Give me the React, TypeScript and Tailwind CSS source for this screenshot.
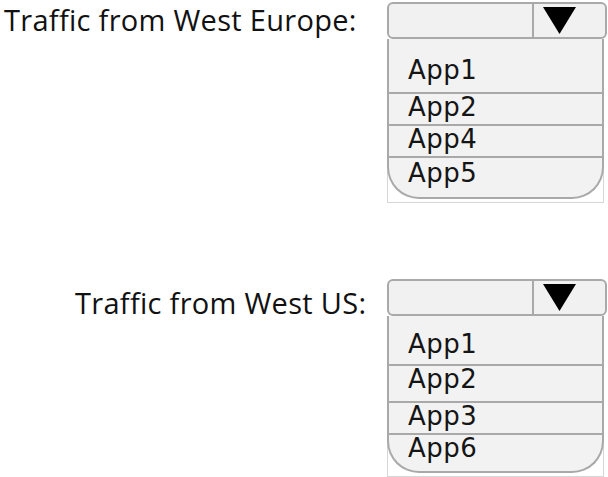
type Row = { label: string; h: number; pt: number; divider: boolean };

const europeRows: Row[] = [
  { label: "App1", h: 53, pt: 18, divider: false },
  { label: "App2", h: 32, pt: 0, divider: true },
  { label: "App4", h: 32, pt: 0, divider: true },
  { label: "App5", h: 41, pt: 2, divider: true },
];

const usRows: Row[] = [
  { label: "App1", h: 48, pt: 15, divider: false },
  { label: "App2", h: 37, pt: 0, divider: true },
  { label: "App3", h: 32, pt: 0, divider: true },
  { label: "App6", h: 38, pt: 0, divider: true },
];

function Dropdown({ rows }: { rows: Row[] }) {
  return (
    <div className="w-[220px] flex flex-col">
      <div className="h-[37px] flex rounded-[6px] border-2 border-[#a9a9a9] bg-[#f1f1f1]">
        <div className="flex-1" />
        <div className="w-[73px] border-l-2 border-[#a9a9a9] flex items-center pl-[9px]">
          <svg width="33" height="27" viewBox="0 0 33 27">
            <polygon points="0,0 33,0 16.5,27" fill="#000" />
          </svg>
        </div>
      </div>
      <div className="border border-[#d6d6d6] border-t-0 mr-[3px] pb-[3px]">
        <div className="border-2 border-t-0 border-[#a9a9a9] rounded-b-[32px] bg-[#f2f2f2] -mr-[1px] -ml-[1px] overflow-hidden">
          {rows.map((r) => (
            <div
              key={r.label}
              className={
                "pl-[19px] " + (r.divider ? "border-t-2 border-[#a9a9a9]" : "")
              }
              style={{ height: r.h, paddingTop: r.pt }}
            >
              <span className="block text-[26px] leading-none tracking-[0.5px] text-[#151515] font-['DejaVu_Sans',sans-serif]">
                {r.label}
              </span>
            </div>
          ))}
        </div>
      </div>
    </div>
  );
}

export default function App() {
  return (
    <div className="w-[608px] h-[477px] bg-white font-['Open_Sans',sans-serif] text-[#111]">
      <div className="flex">
        <div className="w-[387px] pl-[4px] text-[29px] leading-[40px] tracking-[0.3px]">
          Traffic from West Europe:
        </div>
        <div className="mt-[2px]">
          <Dropdown rows={europeRows} />
        </div>
      </div>
      <div className="flex pt-[76px]">
        <div className="w-[387px] pl-[75px] pt-[4px] text-[29px] leading-[40px] tracking-[0.3px]">
          Traffic from West US:
        </div>
        <Dropdown rows={usRows} />
      </div>
    </div>
  );
}
